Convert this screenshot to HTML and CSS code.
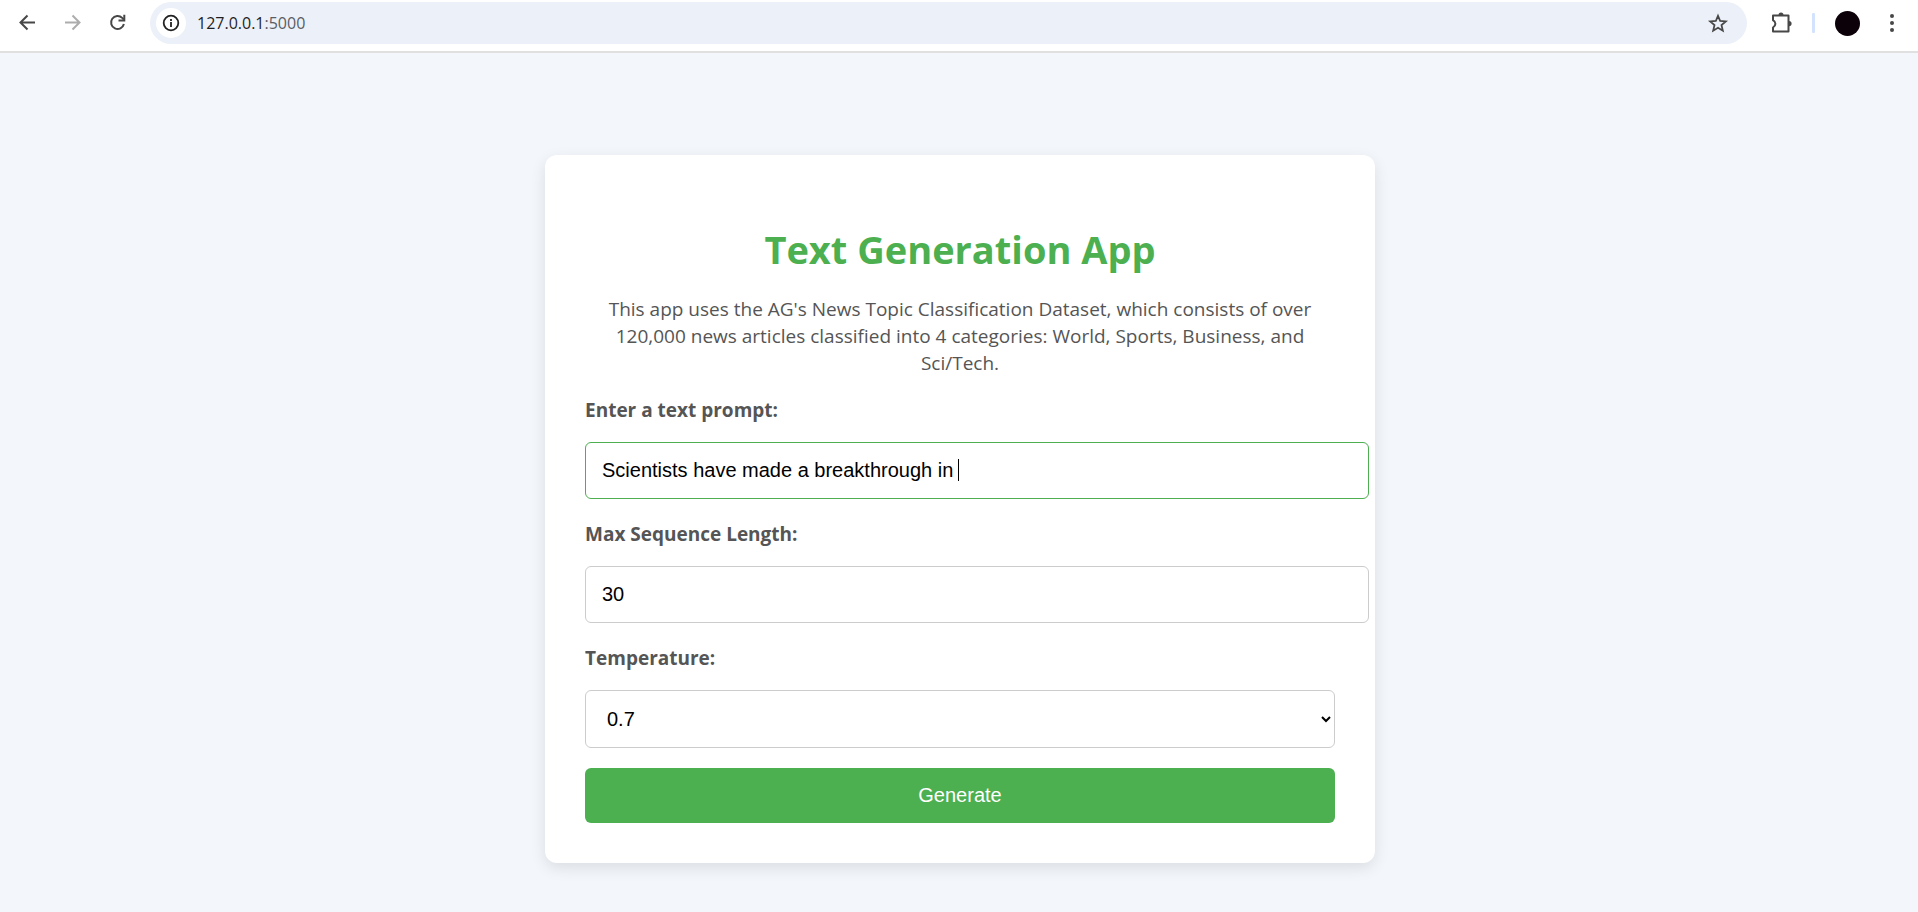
FILE: index.html
```html
<!DOCTYPE html>
<html lang="en">
<head>
  <meta charset="utf-8">
  <title>Text Generation App</title>
  <link rel="stylesheet" href="styles.css">
</head>
<body>
  <header class="toolbar">
    <nav class="nav-buttons" aria-label="Navigation">
      <button class="icon-button" type="button" aria-label="Back">
        <svg viewBox="0 0 24 24" width="24" height="24" fill="none" stroke="currentColor" stroke-width="2"><path d="M19 11.500H5M11.500 4.500l-7 7 7 7"/></svg>
      </button>
      <button class="icon-button icon-button-muted" type="button" aria-label="Forward">
        <svg viewBox="0 0 24 24" width="24" height="24" fill="none" stroke="currentColor" stroke-width="2"><path d="M4 11.500h14M11.500 4.500l7 7-7 7"/></svg>
      </button>
      <button class="icon-button" type="button" aria-label="Reload">
        <svg viewBox="0 0 24 24" width="24" height="24" fill="none" stroke="currentColor" stroke-width="2"><path d="M17.900 13A6.500 6.500 0 1 1 16.200 6.900L17.800 8.500"/><path d="M18.300 3.800V9.500H12.500"/></svg>
      </button>
    </nav>
    <div class="address">
      <button class="site-info" type="button" aria-label="Site information">
        <svg viewBox="0 0 20 20" width="20" height="20" fill="none" stroke="currentColor"><circle cx="10" cy="10" r="7.300" stroke-width="1.800"/><path d="M10 9v5M10 6v2" stroke-width="1.800"/></svg>
      </button>
      <span class="url">127.0.0.1<span class="url-port">:5000</span></span>
      <button class="icon-button" type="button" aria-label="Bookmark">
        <svg viewBox="0 0 24 24" width="24" height="24" fill="none" stroke="currentColor" stroke-width="1.800"><path d="M12 4.800l2.200 5.200 5.600.450-4.300 3.700 1.300 5.500L12 16.700l-4.800 2.950 1.300-5.500-4.300-3.700L9.800 10z"/></svg>
      </button>
    </div>
    <div class="actions">
      <button class="icon-button" type="button" aria-label="Extensions">
        <svg viewBox="0 0 24 24" width="24" height="24"><path d="M4 4.500H19.500V20.500H4V16.500C7.200 14.500 7.200 11.200 4 9.200Z" fill="none" stroke="currentColor" stroke-width="2" stroke-linejoin="round"/><path d="M9.500 4a2.500 2.500 0 0 1 5 0zM20 10a2.600 2.600 0 0 1 0 5.200z" fill="currentColor"/></svg>
      </button>
      <span class="divider"></span>
      <button class="avatar" type="button" aria-label="Profile"></button>
      <button class="icon-button" type="button" aria-label="Menu">
        <svg viewBox="0 0 24 24" width="24" height="24" fill="currentColor"><circle cx="12" cy="5" r="2"/><circle cx="12" cy="12" r="2"/><circle cx="12" cy="19" r="2"/></svg>
      </button>
    </div>
  </header>
  <main class="page">
    <section class="card">
      <h1 class="title">Text Generation App</h1>
      <p class="intro">This app uses the AG's News Topic Classification Dataset, which consists of over 120,000 news articles classified into 4 categories: World, Sports, Business, and Sci/Tech.</p>
      <form class="form">
        <label class="label" for="prompt">Enter a text prompt:</label>
        <div class="field">
          <input class="control control-active" id="prompt" type="text" value="Scientists have made a breakthrough in ">
          <span class="caret"></span>
        </div>
        <label class="label" for="length">Max Sequence Length:</label>
        <div class="field">
          <input class="control" id="length" type="text" inputmode="numeric" value="30">
        </div>
        <label class="label" for="temperature">Temperature:</label>
        <select class="control select" id="temperature">
          <option>0.7</option>
        </select>
        <button class="submit" type="button">Generate</button>
      </form>
    </section>
  </main>
</body>
</html>
```
FILE: styles.css
```css
body {
  margin: 0;
  min-height: 100vh;
  display: flex;
  flex-direction: column;
  background: #f3f7fc;
  color: #555;
  font-family: "Open Sans", "Noto Sans", sans-serif;
}

button {
  padding: 0;
  border: 0;
  background: none;
  cursor: pointer;
}

.toolbar {
  display: flex;
  align-items: center;
  padding: 2px 14px 7px 16px;
  background: #fff;
  border-bottom: 2px solid #e0e0e0;
}

.nav-buttons {
  display: flex;
  gap: 21px;
  margin-right: 20px;
}

.icon-button {
  display: flex;
  color: #474747;
}

.icon-button-muted {
  color: #adadad;
}

.address {
  flex: 1;
  display: flex;
  align-items: center;
  height: 42px;
  padding: 0 17px 0 6px;
  border-radius: 21px;
  background: #ecf0f9;
}

.site-info {
  display: flex;
  align-items: center;
  justify-content: center;
  width: 30px;
  height: 30px;
  margin-right: 11px;
  border-radius: 50%;
  background: #fff;
  color: #222;
}

.url {
  flex: 1;
  font-size: 16px;
  color: #1f1f1f;
}

.url-port {
  color: #5a5d63;
}

.actions {
  display: flex;
  align-items: center;
  margin-left: 22px;
}

.divider {
  width: 3px;
  height: 20px;
  margin: 0 20px 0 19px;
  border-radius: 1px;
  background: #d3e3fd;
}

.avatar {
  width: 25px;
  height: 25px;
  margin-right: 20px;
  border-radius: 50%;
  background: #0c0009;
}

.page {
  flex: 1;
  display: flex;
  align-items: center;
  justify-content: center;
  padding: 102px 20px 49px 22px;
}

.card {
  flex: 0 1 750px;
  padding: 40px;
  border-radius: 12px;
  background: #fff;
  box-shadow: 0 5px 15px rgba(0, 0, 0, 0.1);
}

.title {
  margin: 28px 0 20px;
  font-size: 38px;
  line-height: 53px;
  text-align: center;
  color: #4caf50;
}

.intro {
  margin: 0 0 20px;
  font-size: 19px;
  line-height: 27px;
  text-align: center;
}

.form {
  display: flex;
  flex-direction: column;
}

.label {
  margin-bottom: 18px;
  font-size: 19px;
  font-weight: 700;
  line-height: 27px;
}

.field {
  position: relative;
  margin-bottom: 22px;
}

.control {
  width: 100%;
  padding: 16px;
  border: 1px solid #ccc;
  border-radius: 6px;
  outline: 0;
  background: #fff;
  color: #000;
  font-family: "Liberation Sans", Arial, sans-serif;
  font-size: 20px;
  line-height: 23px;
}

.control-active {
  border-color: #4caf50;
}

.caret {
  position: absolute;
  top: 17px;
  left: 373px;
  width: 1px;
  height: 22px;
  background: #000;
}

.select {
  height: 58px;
  margin-bottom: 20px;
  padding-left: 17px;
}

.submit {
  padding: 16px;
  border-radius: 6px;
  background: #4caf50;
  color: #fff;
  font-family: "Liberation Sans", Arial, sans-serif;
  font-size: 20px;
  line-height: 23px;
}
```
